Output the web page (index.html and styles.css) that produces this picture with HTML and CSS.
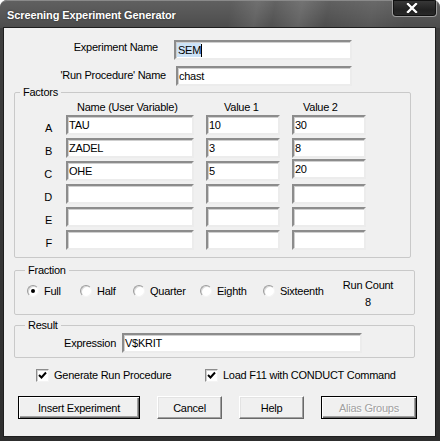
FILE: index.html
```html
<!DOCTYPE html>
<html>
<head>
<meta charset="utf-8">
<title>Screening Experiment Generator</title>
<link rel="stylesheet" href="styles.css">
</head>
<body>
<div class="window">
  <div class="titlebar">
    <span class="title">Screening Experiment Generator</span>
    <span class="close">
      <svg width="12" height="10" viewBox="0 0 12 10">
        <path d="M2 1 L10 9 M10 1 L2 9" stroke="#1a1a1a" stroke-width="4.4" stroke-linecap="square"/>
        <path d="M2 1 L10 9 M10 1 L2 9" stroke="#ffffff" stroke-width="2.4" stroke-linecap="square"/>
      </svg>
    </span>
  </div>
  <div class="client">
    <div class="toprow toprow-1">
      <span class="toplabel">Experiment Name</span>
      <div class="edit edit-exp"><span class="sel">SEM</span><span class="caret"></span></div>
    </div>
    <div class="toprow toprow-2">
      <span class="toplabel">'Run Procedure' Name</span>
      <div class="edit edit-proc">chast</div>
    </div>

    <fieldset class="group group-factors">
      <legend>Factors</legend>
      <div class="factor-grid">
        <span></span>
        <span class="hdr hdr-name">Name (User Variable)</span>
        <span class="hdr hdr-v1">Value 1</span>
        <span class="hdr hdr-v2">Value 2</span>

        <span class="letter">A</span><div class="edit">TAU</div><div class="edit">10</div><div class="edit">30</div>
        <span class="letter">B</span><div class="edit">ZADEL</div><div class="edit">3</div><div class="edit">8</div>
        <span class="letter">C</span><div class="edit">OHE</div><div class="edit">5</div><div class="edit edit-up">20</div>
        <span class="letter">D</span><div class="edit"></div><div class="edit"></div><div class="edit"></div>
        <span class="letter">E</span><div class="edit"></div><div class="edit"></div><div class="edit"></div>
        <span class="letter">F</span><div class="edit"></div><div class="edit"></div><div class="edit"></div>
      </div>
    </fieldset>

    <fieldset class="group group-fraction">
      <legend>Fraction</legend>
      <div class="fraction-body">
        <div class="radios">
          <span class="radio-item"><span class="radio checked"></span>Full</span>
          <span class="radio-item"><span class="radio"></span>Half</span>
          <span class="radio-item"><span class="radio"></span>Quarter</span>
          <span class="radio-item"><span class="radio"></span>Eighth</span>
          <span class="radio-item"><span class="radio"></span>Sixteenth</span>
        </div>
        <div class="runcount">
          <span>Run Count</span>
          <span>8</span>
        </div>
      </div>
    </fieldset>

    <fieldset class="group group-result">
      <legend>Result</legend>
      <div class="result-row">
        <span class="result-label">Expression</span>
        <div class="edit edit-expr">V$KRIT</div>
      </div>
    </fieldset>

    <div class="checks">
      <span class="check-item"><span class="checkbox"><svg width="9" height="9" viewBox="0 0 9 9"><path d="M1 4 L3.5 6.5 L8 1.5" fill="none" stroke="#000" stroke-width="2"/></svg></span>Generate Run Procedure</span>
      <span class="check-item"><span class="checkbox"><svg width="9" height="9" viewBox="0 0 9 9"><path d="M1 4 L3.5 6.5 L8 1.5" fill="none" stroke="#000" stroke-width="2"/></svg></span>Load F11 with CONDUCT Command</span>
    </div>

    <div class="buttons">
      <button class="btn btn-default btn-insert">Insert Experiment</button>
      <button class="btn btn-small">Cancel</button>
      <button class="btn btn-small">Help</button>
      <button class="btn btn-default btn-alias" disabled>Alias Groups</button>
    </div>
  </div>
</div>
</body>
</html>
```

FILE: styles.css
```css
* { box-sizing: border-box; }

html, body {
  margin: 0;
  padding: 0;
  background: #ffffff;
}

body {
  font-family: "Liberation Sans", Arial, sans-serif;
  font-size: 11px;
  letter-spacing: -0.25px;
  color: #000;
}

.window {
  width: 440px;
  height: 441px;
  border-radius: 7px 7px 0 0;
  background: linear-gradient(180deg, #4c4c4c 0px, #3e3e3e 30px, #2e2e2e 100%);
  display: flex;
  flex-direction: column;
  overflow: hidden;
}

.titlebar {
  height: 28px;
  flex: none;
  display: flex;
  align-items: flex-start;
  padding-left: 7px;
  border-top: 1px solid #8a8a8a;
  border-radius: 7px 7px 0 0;
  background:
    linear-gradient(100deg,
      rgba(255,255,255,0) 0%,
      rgba(255,255,255,0) 52%,
      rgba(255,255,255,0.10) 58%,
      rgba(255,255,255,0.02) 62%,
      rgba(255,255,255,0.12) 68%,
      rgba(255,255,255,0) 74%,
      rgba(255,255,255,0.06) 84%,
      rgba(255,255,255,0) 92%),
    linear-gradient(180deg, #606060 0%, #545454 60%, #4c4c4c 100%);
}

.title {
  margin-top: 8px;
  color: #fff;
  font-weight: bold;
  font-size: 11px;
  letter-spacing: -0.1px;
  text-shadow: 0 0 2px rgba(0,0,0,0.6);
  flex: 1;
}

.close {
  width: 45px;
  height: 17px;
  margin-top: -1px;
  margin-right: 3px;
  background: linear-gradient(180deg, #3a3a3a 0%, #222 60%, #2a2a2a 100%);
  border: 1px solid #9a9a9a;
  border-top: none;
  border-radius: 0 0 4px 4px;
  box-shadow: inset 0 0 0 1px #111;
  display: flex;
  align-items: center;
  justify-content: center;
  padding-right: 6px;
}

.client {
  flex: none;
  width: 431px;
  height: 408px;
  margin-left: 4px;
  background: #f0f0f0;
  box-shadow: 0 0 0 1px #1e1e1e;
  display: flex;
  flex-direction: column;
  padding-top: 12px;
}

/* top rows */
.toprow {
  display: flex;
  align-items: flex-start;
  height: 20px;
}
.toprow-2 { margin-top: 6px; }

.toplabel {
  text-align: right;
  line-height: 14px;
}
.toprow-1 .toplabel { width: 154px; margin-right: 16px; }
.toprow-2 .toplabel { width: 162px; margin-right: 10px; margin-top: 2px; }

.edit {
  height: 20px;
  background: #fff;
  border: 2px solid;
  border-color: #8c8c8c #ececec #ececec #8c8c8c;
  box-shadow: inset 1px 1px 0 #cfcfcf;
  padding: 0 1px;
  line-height: 16px;
  white-space: nowrap;
  overflow: hidden;
  display: flex;
  align-items: center;
}
.edit-exp { width: 178px; }
.edit-proc { width: 176px; }

.sel {
  background: #cde3f7;
  line-height: 14px;
  padding: 0 0 0 1px;
}
.caret {
  width: 1px;
  height: 13px;
  background: #000;
}

/* group boxes */
.group {
  margin: 0 0 0 10px;
  padding: 0;
  border: 1px solid #c9c9c9;
  border-radius: 2px;
  min-width: 0;
}
.group legend {
  padding: 0 3px;
  line-height: 13px;
}

.group-factors {
  width: 397px;
  margin-top: 0;
  padding-bottom: 7px;
}
.group-factors legend { margin-left: 5px; }

.factor-grid {
  display: grid;
  grid-template-columns: 39px 128px 74px 74px;
  grid-template-rows: 12px repeat(6, 20px);
  column-gap: 12px;
  row-gap: 3px;
  padding-top: 1px;
}
.hdr { line-height: 12px; margin-top: 1px; }
.hdr-name { padding-left: 11px; }
.hdr-v1 { padding-left: 18px; }
.hdr-v2 { padding-left: 11px; }

.letter {
  text-align: right;
  padding-right: 2px;
  line-height: 20px;
  padding-top: 3px;
}
.edit-up { margin-top: -2px; }

.group-fraction {
  width: 401px;
  margin-top: 6px;
  padding: 0 0 3px 12px;
}
.group-fraction legend { margin-left: -2px; }

.fraction-body {
  display: flex;
  align-items: flex-start;
}
.radios {
  display: grid;
  grid-template-columns: 53px 53px 67px 63px 80px;
  margin-top: 7px;
}
.radio-item {
  display: flex;
  align-items: center;
  line-height: 14px;
}
.radio {
  width: 12px;
  height: 12px;
  border-radius: 50%;
  margin-right: 5px;
  background: #fff;
  border: 1px solid;
  border-color: #9c9c9c #f4f4f4 #f4f4f4 #9c9c9c;
  box-shadow: inset 1px 1px 0 #d8d8d8;
  display: flex;
  align-items: center;
  justify-content: center;
}
.radio.checked::after {
  content: "";
  width: 4px;
  height: 4px;
  border-radius: 50%;
  background: #000;
}

.runcount {
  width: 50px;
  display: flex;
  flex-direction: column;
  align-items: center;
  line-height: 17px;
  white-space: nowrap;
}

.group-result {
  width: 401px;
  margin-top: 4px;
  padding-bottom: 4px;
}
.group-result legend { margin-left: 10px; }

.result-row {
  display: flex;
  align-items: center;
  padding-top: 1px;
}
.result-label {
  width: 107px;
  text-align: right;
  padding-right: 6px;
}
.edit-expr { width: 240px; }

/* checkboxes */
.checks {
  display: grid;
  grid-template-columns: 169px auto;
  padding-left: 32px;
  margin-top: 11px;
}
.check-item {
  display: flex;
  align-items: center;
  line-height: 13px;
}
.checkbox {
  width: 13px;
  height: 13px;
  margin-right: 5px;
  background: #fff;
  border: 1px solid;
  border-color: #8c8c8c #f4f4f4 #f4f4f4 #8c8c8c;
  box-shadow: inset 1px 1px 0 #cfcfcf;
  display: flex;
  align-items: center;
  justify-content: center;
}

/* buttons */
.buttons {
  display: flex;
  gap: 17px;
  padding-left: 14px;
  margin-top: 14px;
}
.btn {
  height: 23px;
  font-family: "Liberation Sans", Arial, sans-serif;
  font-size: 11px;
  letter-spacing: -0.25px;
  color: #000;
  background: #f0f0f0;
  border: 1px solid;
  border-color: #ffffff #696969 #696969 #ffffff;
  box-shadow: inset -1px -1px 0 #a0a0a0, inset 1px 1px 0 #e3e3e3;
  padding: 0;
  border-radius: 0;
}
.btn-default {
  border: 1px solid #000;
  box-shadow: inset 1px 1px 0 #ffffff, inset -1px -1px 0 #696969, inset -2px -2px 0 #a0a0a0;
}
.btn-insert { width: 122px; }
.btn-small { width: 65px; }
.btn-alias { width: 96px; margin-left: 0; }
.btn:disabled {
  color: #a0a0a0;
  text-shadow: 1px 1px 0 #ffffff;
}
```
